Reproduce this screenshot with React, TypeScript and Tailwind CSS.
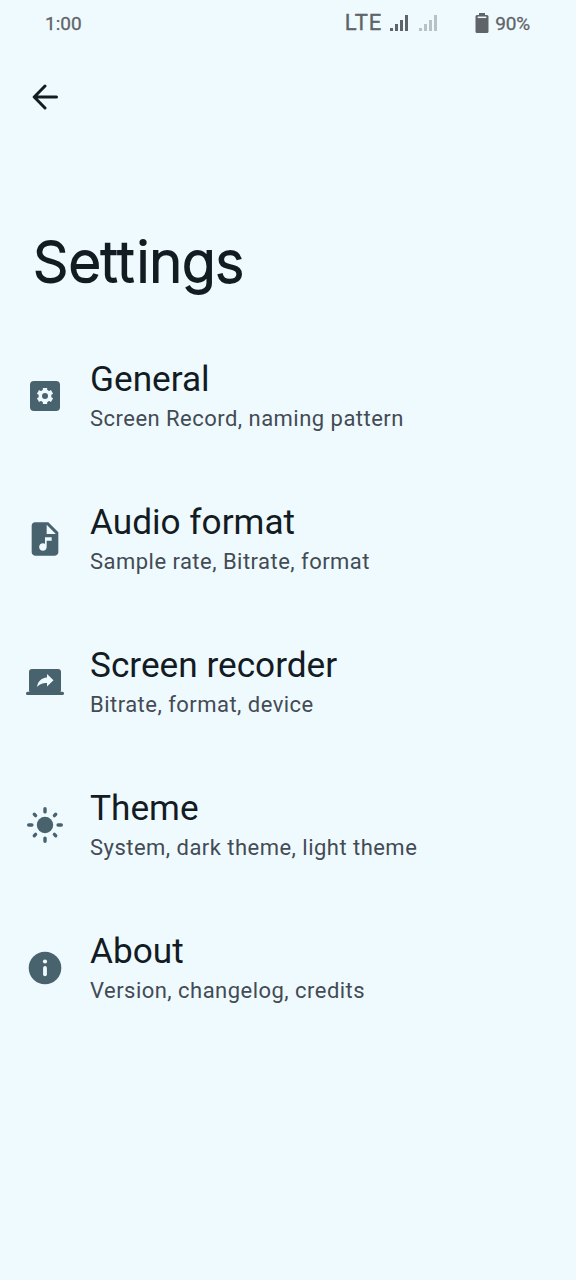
import { type ReactNode } from "react";
import { MdAudioFile } from "react-icons/md";

function BackIcon() {
  return (
    <svg width="26" height="26" viewBox="0 0 26 26" fill="none" stroke="currentColor" strokeWidth="3" strokeLinecap="round" strokeLinejoin="round">
      <path d="M24.500 13H2.500M13 2 2.200 13 13 24" />
    </svg>
  );
}

function GeneralIcon() {
  return (
    <svg width="40" height="40" viewBox="0 0 40 40">
      <rect x="5" y="5" width="30" height="30" rx="4" fill="currentColor" />
      <circle cx="20" cy="20" r="4.700" fill="none" stroke="#effaff" strokeWidth="3.400" />
      <g stroke="#effaff" strokeWidth="4.300">
        <path d="M20 11.900v3.500M20 24.600v3.500" />
        <path d="M20 11.900v3.500M20 24.600v3.500" transform="rotate(60 20 20)" />
        <path d="M20 11.900v3.500M20 24.600v3.500" transform="rotate(120 20 20)" />
      </g>
    </svg>
  );
}

function ScreenIcon() {
  return (
    <svg width="40" height="40" viewBox="0 0 40 40" fill="currentColor">
      <rect x="4" y="7" width="32" height="24" rx="3" />
      <rect x="1" y="29.700" width="38" height="3.300" rx="1.600" />
      <path d="M12 25c.8-5.500 4-9 10-9.600V12l6.500 6.300-6.500 6.300v-3.700c-4.700 0-7.300 1-10 4.100z" fill="#effaff" />
    </svg>
  );
}

function SunIcon() {
  return (
    <svg width="40" height="40" viewBox="0 0 40 40" fill="currentColor">
      <circle cx="20" cy="20" r="8.200" />
      <path d="M20 3.700v3.200M20 33.100v3.200M3.700 20h3.200M33.100 20h3.200M9.300 9.300l1.300 1.300M29.400 29.400l1.300 1.300M9.300 30.700l1.300-1.300M29.400 10.600l1.300-1.300" stroke="currentColor" strokeWidth="3.400" strokeLinecap="round" />
    </svg>
  );
}

function InfoIcon() {
  return (
    <svg width="40" height="40" viewBox="0 0 40 40">
      <circle cx="20" cy="20" r="16.300" fill="currentColor" />
      <circle cx="20" cy="13.500" r="2.100" fill="#effaff" />
      <path d="M20 20v6.300" stroke="#effaff" strokeWidth="3.800" strokeLinecap="round" />
    </svg>
  );
}

function SignalIcon() {
  return (
    <svg width="19" height="17" viewBox="0 0 19 17" fill="currentColor">
      <path d="M0 13h3v3H0zM5 9h3v7H5zM10 5h3v11h-3zM15 0h3v16h-3z" />
    </svg>
  );
}

function BatteryIcon() {
  return (
    <svg width="14" height="22" viewBox="0 0 14 22">
      <path d="M4 1h6v2h2q1.500 0 1.500 1.500v15Q13.500 21 12 21H2Q.5 21 .5 19.500v-15Q.5 3 2 3h2z" fill="currentColor" />
      <path d="M2.700 5.300h8.600" stroke="#effaff" strokeWidth="1.500" />
    </svg>
  );
}

const items: { title: string; detail: string; icon: ReactNode }[] = [
  { title: "General", detail: "Screen Record, naming pattern", icon: <GeneralIcon /> },
  { title: "Audio format", detail: "Sample rate, Bitrate, format", icon: <MdAudioFile size={40} /> },
  { title: "Screen recorder", detail: "Bitrate, format, device", icon: <ScreenIcon /> },
  { title: "Theme", detail: "System, dark theme, light theme", icon: <SunIcon /> },
  { title: "About", detail: "Version, changelog, credits", icon: <InfoIcon /> },
];

export default function App() {
  return (
    <div className="h-[1280px] w-[576px] bg-[#effaff] font-[Roboto,sans-serif] text-[#131b23]">
      <header className="flex h-12 items-center justify-between pr-[46px] pl-[45px] text-[#5f6468]">
        <span className="text-[19px] [-webkit-text-stroke:0.300px_#5f6468]">1:00</span>
        <div className="flex items-center pb-0.5">
          <span className="mr-2 text-[22px] leading-none tracking-[1px] [-webkit-text-stroke:0.400px_#5f6468]">LTE</span>
          <SignalIcon />
          <span className="ml-[10px] text-[#b8c1c7]"><SignalIcon /></span>
          <span className="ml-[37px]"><BatteryIcon /></span>
          <span className="ml-[6px] pt-0.5 text-[19px] tracking-[-0.200px] [-webkit-text-stroke:0.300px_#5f6468]">90%</span>
        </div>
      </header>
      <nav className="pt-9 pl-8"><BackIcon /></nav>
      <h1 className="h-[181px] pt-[117px] pl-[33px] font-[Inter,sans-serif] text-[56px] leading-[70px] font-light tracking-[-0.300px] [-webkit-text-stroke:1.800px_#131b23] [stroke-linejoin:round]">
        <span className="tracking-[0px]">Set</span><span className="tracking-[2.200px]">t</span>ings
      </h1>
      <main className="pt-[67px]">
        {items.map((item) => (
          <section key={item.title} className="flex h-[143px] gap-[25px] pl-[25px]">
            <div className="pt-[18px] text-[#48626e]">{item.icon}</div>
            <div>
              <h2 className="text-[35.200px] leading-[42px]">{item.title}</h2>
              <p className="text-[22px] leading-[38px] tracking-[0.470px] text-[#434b54]">{item.detail}</p>
            </div>
          </section>
        ))}
      </main>
    </div>
  );
}
